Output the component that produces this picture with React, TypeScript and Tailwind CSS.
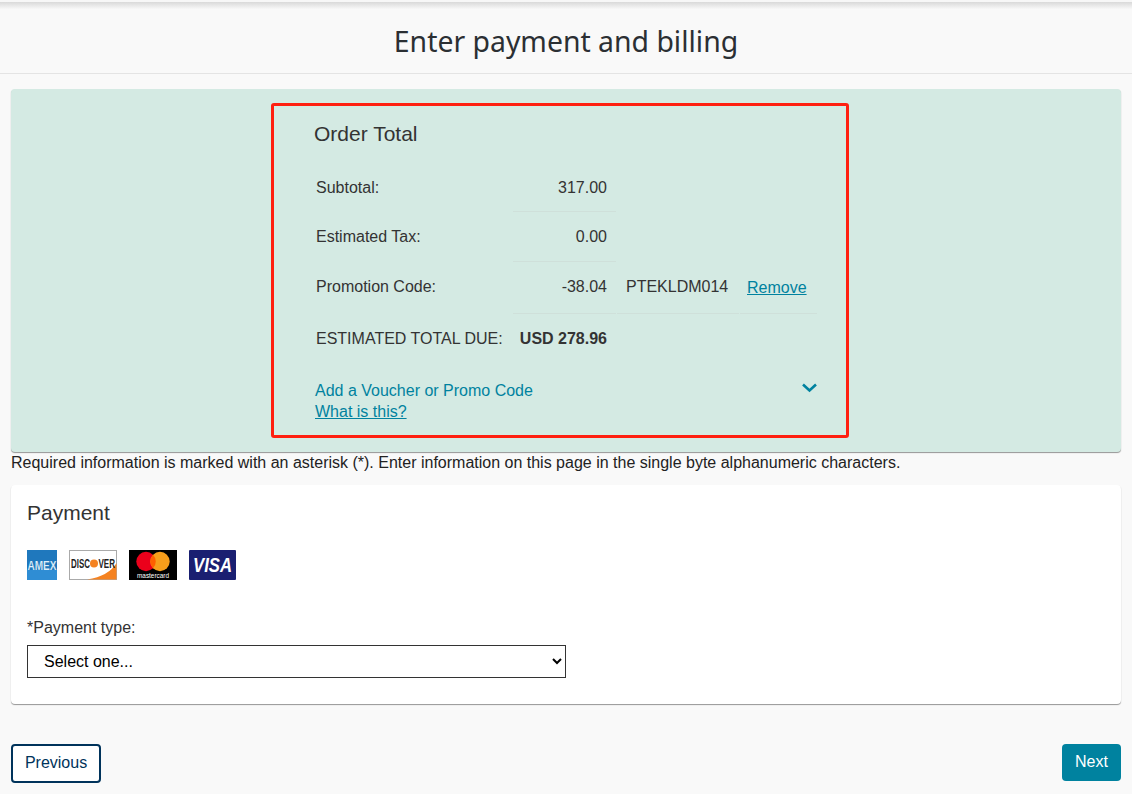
import React from "react";

function Row({ label, amount, code, remove, line, h, bold, shift, amountShift }: { label: string; amount: string; code?: string; remove?: boolean; line: "none" | "amount" | "all"; h: string; bold?: boolean; shift?: string; amountShift?: string }) {
  const b = "border-b border-[#cfe0da]";
  const s = shift ?? "";
  return (
    <div className={`flex ${h}`}>
      <div className={`w-[205px] pl-2 flex items-center ${s}`}>{label}</div>
      <div className={`w-[103px] pr-[9px] flex items-center justify-end ${amountShift ?? s} ${bold ? "font-bold" : ""} ${line !== "none" ? b : ""}`}>{amount}</div>
      <div className={`w-[122px] ml-px pl-[9px] flex items-center ${s} ${line === "all" ? b : ""}`}>{code}</div>
      <div className={`w-[77px] ml-px pl-[7px] flex items-center ${line === "all" ? b : ""}`}>
        {remove && <a className="underline text-[#00829f]">Remove</a>}
      </div>
    </div>
  );
}

export default function App() {
  return (
    <div className="min-h-[794px] bg-[#f9f9f9] text-[16px] leading-6 text-[#333] font-['Liberation_Sans',Arial,sans-serif] overflow-hidden">
      <div className="h-[2px] bg-[#f7f7f7]"></div>
      <div className="h-[7px] bg-gradient-to-b from-[#d9d9d9] to-[#f8f8f8]"></div>
      <header className="h-[65px] border-b border-[#e4e4e4] flex items-center justify-center">
        <h1 className="text-[28.4px] leading-10 text-[#2b2f33] font-['Noto_Sans',sans-serif]">Enter payment and billing</h1>
      </header>
      <main className="px-[11px] pt-[15px]">
        <section className="h-[363px] bg-[#d4eae3] rounded shadow-[0_1px_1px_rgba(0,0,0,0.4)] pt-[14px] pr-[12px] flex justify-center">
          <div className="w-[578px] h-[335px] border-[3px] border-[#ff1f10] rounded-[3px] pl-[34px] pt-[14px]">
            <h2 className="text-[21px] leading-7 pl-[6px] text-[#333]">Order Total</h2>
            <div className="mt-[14px]">
              <Row label="Subtotal:" amount="317.00" line="amount" h="h-[50px]" shift="pt-px" amountShift="pt-[2px]" />
              <Row label="Estimated Tax:" amount="0.00" line="amount" h="h-[50px]" />
              <Row label="Promotion Code:" amount="-38.04" code="PTEKLDM014" remove line="all" h="h-[52px]" shift="pb-[2px]" />
              <Row label="ESTIMATED TOTAL DUE:" amount="USD 278.96" bold line="none" h="h-[50px]" />
            </div>
            <div className="flex pl-[7px] w-[510px] justify-between mt-[14px]">
              <div className="text-[#00829f] leading-[21px]">
                <div className="pt-[2px]">Add a Voucher or Promo Code</div>
                <a className="underline block">What is this?</a>
              </div>
              <svg width="17" height="10" viewBox="0 0 17 10" className="mt-[5px]" fill="none" stroke="#00829f" strokeWidth="2.6">
                <path d="M2 1.5 L8.5 7.5 L15 1.5" />
              </svg>
            </div>
          </div>
        </section>
        <p className="mt-px text-[#222] leading-5">Required information is marked with an asterisk (*). Enter information on this page in the single byte alphanumeric characters.</p>
        <section className="mt-[12px] h-[219px] bg-white rounded shadow-[0_1px_1px_rgba(0,0,0,0.4)] px-4 pt-[14px]">
          <h2 className="text-[21px] leading-7 text-[#333]">Payment</h2>
          <div className="flex mt-[23px] gap-3 items-start">
            <svg width="30" height="30" viewBox="0 0 30 30"><rect width="30" height="30" fill="#1f78bd" /><rect y="20" width="30" height="10" fill="#2f8dd4" /><text x="0.5" y="20" fontSize="13" fontWeight="700" fill="#dff0fb" stroke="#1769a8" strokeWidth="0.15" textLength="29" lengthAdjust="spacingAndGlyphs" fontFamily="Liberation Sans">AMEX</text></svg>
            <svg width="48" height="30" viewBox="0 0 48 30"><rect x="0.5" y="0.5" width="47" height="29" fill="#fff" stroke="#aaa" /><path d="M18 29.5 Q40 26 47.5 13 V29.5 Z" fill="#f58220" /><text x="2" y="17.5" fontSize="12" fontWeight="700" fill="#222" textLength="19" lengthAdjust="spacingAndGlyphs" fontFamily="Liberation Sans">DISC</text><circle cx="25" cy="13.5" r="4" fill="#f58220" /><text x="29.5" y="17.5" fontSize="12" fontWeight="700" fill="#222" textLength="16.5" lengthAdjust="spacingAndGlyphs" fontFamily="Liberation Sans">VER</text></svg>
            <svg width="48" height="30" viewBox="0 0 48 30"><rect width="48" height="30" fill="#000" /><circle cx="17" cy="11.5" r="9.7" fill="#eb001b" /><circle cx="31" cy="11.5" r="9.7" fill="#f79e1b" /><path d="M24 4.7 a9.7 9.7 0 0 1 0 13.6 a9.7 9.7 0 0 1 0 -13.6" fill="#ff5f00" /><text x="8" y="27.5" fontSize="7" fill="#fff" textLength="32" lengthAdjust="spacingAndGlyphs" fontFamily="Liberation Sans">mastercard</text></svg>
            <svg width="47" height="30" viewBox="0 0 47 30"><rect width="47" height="30" rx="1" fill="#1a1f71" /><text x="4" y="22" fontSize="20" fontWeight="700" fontStyle="italic" fill="#fff" textLength="39" lengthAdjust="spacingAndGlyphs" fontFamily="Liberation Sans">VISA</text></svg>
          </div>
          <label className="block mt-[38px] leading-5 text-[#333]">*Payment type:</label>
          <select className="mt-[7px] w-[539px] h-[33px] border border-[#333] bg-white pl-3 text-black text-[16px]">
            <option>Select one...</option>
          </select>
        </section>
        <div className="mt-[40px] flex justify-between items-start">
          <button className="w-[90px] h-[39px] border-2 border-[#00335b] rounded bg-white text-[#00335b] pb-[2px]">Previous</button>
          <button className="w-[59px] h-[37px] rounded bg-[#00829f] text-white pb-[2px]">Next</button>
        </div>
      </main>
    </div>
  );
}
